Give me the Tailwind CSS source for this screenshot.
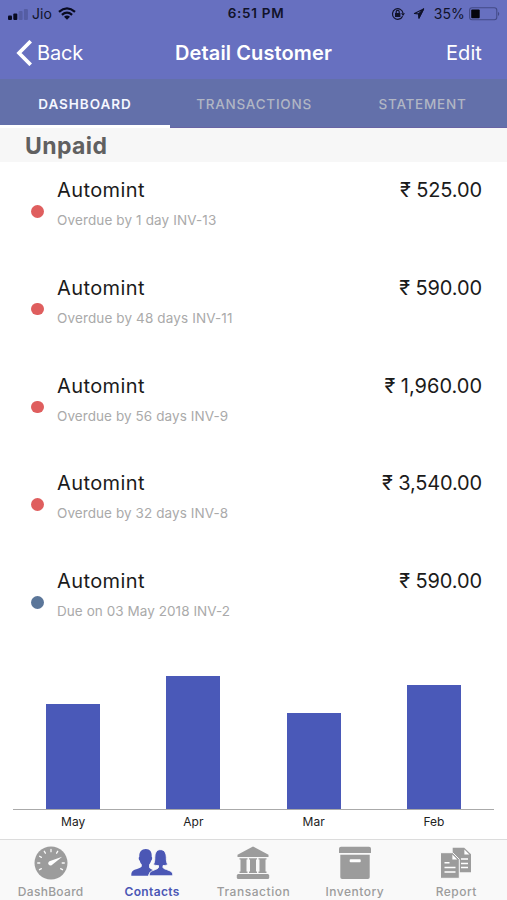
<!DOCTYPE html>
<html lang="en">
<head>
<meta charset="utf-8">
<title>Detail Customer</title>
<script src="https://cdn.jsdelivr.net/npm/@tailwindcss/browser@4"></script>
</head>
<body class="w-[507px] h-[900px] overflow-hidden bg-white font-['Inter','Noto_Sans',sans-serif] flex flex-col">
<header class="h-[79px] shrink-0 bg-[#6770c0] flex flex-col">
  <div class="h-[27px] grid grid-cols-3 items-center pl-2 pr-[6px] text-[#11132a] text-[13px] leading-none">
    <div class="flex items-center">
      <svg class="w-5 h-3 mt-[2px]" viewBox="0 0 20 12"><rect x="0" y="6.5" width="4" height="4.5" rx="1" fill="#080a20"/><rect x="5.3" y="4.5" width="4" height="6.5" rx="1" fill="#080a20"/><rect x="10.6" y="2" width="4" height="9" rx="1" fill="#555da3"/><rect x="15.9" y="0" width="4" height="11" rx="1" fill="#555da3"/></svg>
      <span class="ml-1 text-[14px]">Jio</span>
      <svg class="w-[18px] h-[13px] ml-[6px]" viewBox="0 0 18 13" fill="none" stroke="#080a20" stroke-width="2.3"><path d="M1 4.8Q9-2 17 4.8M3.9 7.8Q9 3.5 14.1 7.8"/><path d="M6 9.7Q9 7.3 12 9.7L9 12.8Z" fill="#080a20" stroke="none"/></svg>
    </div>
    <div class="text-center font-semibold text-[13.5px] tracking-[0.7px] pl-[3px] whitespace-nowrap">6:51 PM</div>
    <div class="flex items-center justify-end">
      <svg class="w-[14px] h-[14px]" viewBox="0 0 14 14" fill="none" stroke="#11132a" stroke-width="1.2"><path d="M11.6 9.2A5.3 5.3 0 1 1 12 6"/><path d="M10 6.2h4L12 9z" fill="#11132a" stroke="none"/><rect x="4" y="6" width="5.4" height="4" fill="#11132a" stroke="none"/><path d="M5.2 6V4.8a1.5 1.5 0 0 1 3 0V6"/></svg>
      <svg class="w-[12px] h-[11px] ml-[8px]" viewBox="0 0 13 12" fill="none" stroke="#11132a" stroke-width="1.2" stroke-linejoin="round"><path d="M11.5 1 1.5 6l4.7.4.3 4.6z"/><path d="M11.5 1 6.2 6.4l.3 4.6z" fill="#11132a"/></svg>
      <span class="ml-[9px] text-[14px] tracking-[0.1px]">35%</span>
      <svg class="w-[32px] h-[14px] ml-1" viewBox="0 0 32 14"><rect x=".6" y=".8" width="27.2" height="12" rx="2.5" fill="none" stroke="#434a86" stroke-width="1.1"/><rect x="2.2" y="2.4" width="8.5" height="8.8" rx="1" fill="#04050c"/><path d="M29 4.7q2.5 2.1 0 4.2z" fill="#434a86"/></svg>
    </div>
  </div>
  <div class="h-[51px] grid grid-cols-[1fr_auto_1fr] items-center pl-4 pr-[25px] text-white text-[20px] leading-none">
    <div class="flex items-center">
      <svg class="w-[16px] h-[26px]" viewBox="0 0 16 26" fill="none" stroke="white" stroke-width="3.7"><path d="M14.7 1.2 3 13l11.7 11.8"/></svg>
      <span class="ml-[5px] tracking-[-0.2px]">Back</span>
    </div>
    <h1 class="font-semibold pl-[9px] tracking-[0.12px]">Detail Customer</h1>
    <span class="text-right tracking-[0.1px]">Edit</span>
  </div>
</header>
<nav class="h-[49px] shrink-0 bg-[#6370aa] grid grid-cols-[170px_168px_169px] grid-rows-[49px] text-[13.5px] font-medium text-[#b1b6c4] text-center leading-[50px]">
  <div class="h-[49px] text-[#f5f7ff] border-b-3 border-white font-semibold tracking-[0.95px]">DASHBOARD</div>
  <div class="h-[49px] border-b border-[#6864a4] tracking-[0.75px]">TRANSACTIONS</div>
  <div class="h-[49px] border-b border-[#6864a4] tracking-[0.75px]">STATEMENT</div>
</nav>
<h2 class="h-[34px] shrink-0 bg-[#f7f7f7] pl-[25px] pt-px text-[23px] leading-[35px] font-bold tracking-[0.4px] text-[#606060]">Unpaid</h2>
<main class="h-[489px] shrink-0 grid grid-rows-5 text-[#1b1b1b] text-[20px]">
  <section class="flex items-start pl-[31px] pr-[25px] pt-[13px]">
    <i class="size-[12.5px] mt-[30px] rounded-full bg-[#df5e5e]"></i>
    <div class="ml-[13.5px] flex-1"><p class="leading-[30px] tracking-[0.4px]">Automint</p><p class="text-[13.5px] leading-[30px] tracking-[0.13px] text-[#aaa]">Overdue by 1 day INV-13</p></div>
    <p class="leading-[30px] tracking-[-0.1px]">₹ 525.00</p>
  </section>
  <section class="flex items-start pl-[31px] pr-[25px] pt-[13px]">
    <i class="size-[12.5px] mt-[30px] rounded-full bg-[#df5e5e]"></i>
    <div class="ml-[13.5px] flex-1"><p class="leading-[30px] tracking-[0.4px]">Automint</p><p class="text-[13.5px] leading-[30px] tracking-[0.13px] text-[#aaa]">Overdue by 48 days INV-11</p></div>
    <p class="leading-[30px] tracking-[-0.1px]">₹ 590.00</p>
  </section>
  <section class="flex items-start pl-[31px] pr-[25px] pt-[13px]">
    <i class="size-[12.5px] mt-[30px] rounded-full bg-[#df5e5e]"></i>
    <div class="ml-[13.5px] flex-1"><p class="leading-[30px] tracking-[0.4px]">Automint</p><p class="text-[13.5px] leading-[30px] tracking-[0.08px] text-[#aaa]">Overdue by 56 days INV-9</p></div>
    <p class="leading-[30px]">₹ 1,960.00</p>
  </section>
  <section class="flex items-start pl-[31px] pr-[25px] pt-[13px]">
    <i class="size-[12.5px] mt-[30px] rounded-full bg-[#df5e5e]"></i>
    <div class="ml-[13.5px] flex-1"><p class="leading-[30px] tracking-[0.4px]">Automint</p><p class="text-[13.5px] leading-[30px] tracking-[0.08px] text-[#aaa]">Overdue by 32 days INV-8</p></div>
    <p class="leading-[30px] tracking-[-0.15px]">₹ 3,540.00</p>
  </section>
  <section class="flex items-start pl-[31px] pr-[25px] pt-[13px]">
    <i class="size-[12.5px] mt-[30px] rounded-full bg-[#5b7699]"></i>
    <div class="ml-[13.5px] flex-1"><p class="leading-[30px] tracking-[0.4px]">Automint</p><p class="text-[13.5px] leading-[30px] tracking-[0.06px] text-[#aaa]">Due on 03 May 2018 INV-2</p></div>
    <p class="leading-[30px] tracking-[-0.1px]">₹ 590.00</p>
  </section>
</main>
<div class="h-[188px] shrink-0 px-[13px]">
  <div class="h-[159px] grid grid-cols-4 items-end justify-items-center border-b border-[#aaa]">
    <div class="w-[54px] bg-[#4a59b8]" style="height:105px"></div>
    <div class="w-[54px] bg-[#4a59b8]" style="height:133px"></div>
    <div class="w-[54px] bg-[#4a59b8]" style="height:96px"></div>
    <div class="w-[54px] bg-[#4a59b8]" style="height:124px"></div>
  </div>
  <div class="grid grid-cols-4 text-center text-[12px] leading-[24px] text-[#222]"><span>May</span><span>Apr</span><span>Mar</span><span>Feb</span></div>
</div>
<footer class="h-[61px] shrink-0 bg-[#f9f9f9] border-t border-[#dcdcdc] grid grid-cols-5 pt-[6px] text-[#9c9c9c] text-[12px] font-medium text-center">
  <div class="flex flex-col items-center">
    <svg class="w-[34px] h-[34px]" viewBox="0 0 34 34"><circle cx="17" cy="17" r="16.5" fill="#9c9c9c"/><g stroke="#f9f9f9" stroke-width="1.3" stroke-linecap="round"><path d="M17 3.5v2.2M10.3 5.3l1.1 1.9M23.7 5.3l-1.1 1.9M5.6 10.3l1.8 1.1M3.7 17h2.1M30.3 17h-2.1M5.5 23.7l1.9-1M28.5 23.7l-1.9-1"/></g><path d="m28.2 10.8-9.7 7.6a2.3 2.3 0 1 1-2.4-3.4z" fill="#fff"/></svg>
    <span class="leading-[19px] pt-[2px] tracking-[0.3px]">DashBoard</span>
  </div>
  <div class="flex flex-col items-center text-[#4b57b5] font-semibold">
    <svg class="w-[44px] h-[34px]" viewBox="0 0 44 34" fill="#4b57b5"><path d="M15.8 3c4.2 0 6.3 2.8 5.9 7.8.9.5.4 3.5-.6 3.9-.5 2-1.2 3-2 3.8v2.9c.9 1.6 3.5 2 4 3-3 1.4-4.5 2.6-5 5.4H1.3c0-5.8 2-5.2 7.7-7.5 1.7-.7 2.6-1.2 2.8-2v-1.8c-.9-.9-1.6-1.9-2-3.8-1.2-.5-1.5-3.5-.5-3.9-.3-5 2.3-7.8 6.5-7.8z"/><path d="M29.6 3.7c5-.6 6.7 3.5 6.7 7.9 0 3.4.3 5 1.4 6.8-1.2 1-3.2 1.2-4.7 1.2v1.9c.6 1.5 3.2 1.7 5.2 2.7 3.6 1.4 4.5 1.8 4.5 5.6H19.3c0-4.2 1.4-4.4 4.4-5.6 2-.9 4.1-1.2 4.8-2.7v-1.9c-1.7 0-3.9-.2-5.1-1.2 1.3-1.9 1.3-3.8 1.4-6.8.1-4.6 1.5-7.4 4.8-7.9z" stroke="#f9f9f9" stroke-width=".9"/></svg>
    <span class="leading-[19px] pt-[2px] tracking-[0.35px]">Contacts</span>
  </div>
  <div class="flex flex-col items-center">
    <svg class="w-[34px] h-[34px]" viewBox="0 0 34 34" fill="#9c9c9c"><path d="m17 .5 15.5 8.2V11h-31V8.7z"/><path d="M3.5 12.3h8v1.3h-1v12h1V27h-8v-1.4h1v-12h-1zM13 12.3h8v1.3h-1v12h1V27h-8v-1.4h1v-12h-1zM22.5 12.3h8v1.3h-1v12h1V27h-8v-1.4h1v-12h-1z"/><rect x=".8" y="28" width="32.4" height="5" rx="1.5"/></svg>
    <span class="leading-[19px] pt-[2px] tracking-[0.55px]">Transaction</span>
  </div>
  <div class="flex flex-col items-center">
    <svg class="w-[34px] h-[34px]" viewBox="0 0 34 34" fill="#9c9c9c"><path d="M3 .7h28q2 0 2 2v4.2H1V2.7q0-2 2-2zM2.3 8.7h29.4v22.5q0 1.8-1.8 1.8H4.1q-1.8 0-1.8-1.8z"/><rect x="11.7" y="13.2" width="11" height="3" rx=".8" fill="#fff"/></svg>
    <span class="leading-[19px] pt-[2px] tracking-[0.5px]">Inventory</span>
  </div>
  <div class="flex flex-col items-center">
    <svg class="w-[34px] h-[34px]" viewBox="0 0 34 34" fill="#9c9c9c"><path d="M13.7 1.8h11.5l6.8 6.5v18H13.7z"/><path d="m25.4 3.4 5 5h-5z" fill="#fff"/><path d="M22 13h7M22 17.5h7M22 21.5h7" stroke="#fff" stroke-width="1.3"/><path d="M1.5 6.7h12.2l6.6 6.6v19H1.5z" stroke="#f9f9f9" stroke-width="1"/><path d="m13.4 8.6 4.8 5h-4.8z" fill="#fff"/><path d="M5.5 16.8h5M5.5 21.5h11M5.5 26h11" stroke="#fff" stroke-width="1.4"/></svg>
    <span class="leading-[19px] pt-[2px] tracking-[0.5px]">Report</span>
  </div>
</footer>
</body>
</html>
